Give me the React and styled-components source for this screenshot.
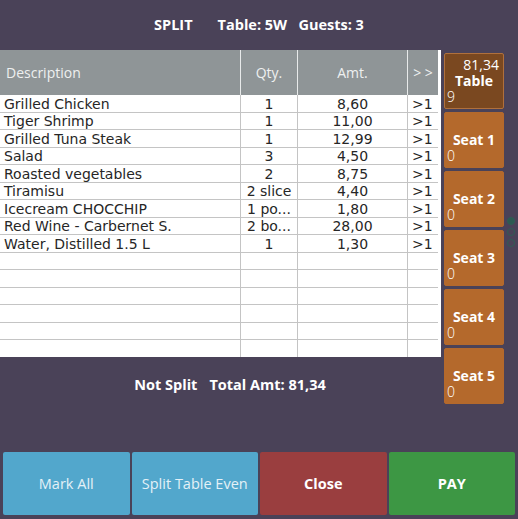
import React from 'react';
import styled, { createGlobalStyle } from 'styled-components';

const GlobalStyle = createGlobalStyle`
  html, body {
    margin: 0;
    padding: 0;
    background: #4a4258;
  }
`;

const Screen = styled.div`
  width: 518px;
  height: 519px;
  background: #4a4258;
  display: flex;
  flex-direction: column;
  font-family: 'Open Sans', 'Noto Sans', sans-serif;
  overflow: hidden;
`;

const TitleBar = styled.div`
  height: 50px;
  display: flex;
  align-items: center;
  justify-content: center;
  gap: 25px;
  color: #fff;
  font-weight: 700;
  font-size: 14.5px;
  padding: 0 0 2px 0;
  box-sizing: border-box;
  white-space: pre;
`;

const Main = styled.div`
  display: flex;
  align-items: flex-start;
`;

const LeftCol = styled.div`
  width: 441px;
  display: flex;
  flex-direction: column;
`;

const Grid = styled.div`
  width: 441px;
  height: 307px;
  background: #fff;
  overflow: hidden;
`;

const cols = '240px 57px 110px 31px';

const HeaderRow = styled.div`
  display: grid;
  grid-template-columns: ${cols};
  height: 45px;
  width: 438px;
  background: #8f9597;
`;

const HeaderCell = styled.div`
  display: flex;
  align-items: center;
  justify-content: ${(p) => (p.left ? 'flex-start' : 'center')};
  padding-left: ${(p) => (p.left ? '6px' : '0')};
  color: #eef0f0;
  font-size: 14px;
  border-left: ${(p) => (p.first ? 'none' : '1px solid #e8eaea')};
  white-space: pre;
`;

const Row = styled.div`
  display: grid;
  grid-template-columns: ${cols};
  width: 438px;
  height: 17.5px;
  box-sizing: border-box;
  border-bottom: ${(p) => (p.last ? 'none' : '1px solid #c4c4c4')};
  font-family: 'DejaVu Sans', 'Liberation Sans', sans-serif;
  font-size: 14px;
  color: #262626;
`;

const Cell = styled.div`
  display: flex;
  align-items: center;
  justify-content: ${(p) => p.align || 'center'};
  padding-left: ${(p) => (p.align === 'flex-start' ? '4px' : '0')};
  border-left: ${(p) => (p.first ? 'none' : '1px solid #c4c4c4')};
  white-space: nowrap;
  overflow: hidden;
  line-height: 1;
  padding-top: 1px;
`;

const TotalLine = styled.div`
  height: 54px;
  display: flex;
  align-items: center;
  justify-content: center;
  padding-left: 19px;
  color: #fff;
  font-weight: 700;
  font-size: 14.5px;
  gap: 12px;
`;

const SideCol = styled.div`
  margin-left: 3px;
  padding-top: 3px;
  width: 60px;
  display: flex;
  flex-direction: column;
  gap: 3px;
`;

const SeatButton = styled.div`
  height: 56px;
  box-sizing: border-box;
  border-radius: 2px;
  background: ${(p) => (p.active ? '#7a4820' : '#b4692c')};
  border: 1px solid ${(p) => (p.active ? '#b0703c' : '#b4692c')};
  color: #fff;
  display: flex;
  flex-direction: column;
  justify-content: center;
  padding: 0 2px;
  font-size: 14px;
`;

const SeatAmt = styled.div`
  text-align: right;
  line-height: 16px;
  height: 16px;
  padding-right: 2px;
  font-weight: 400;
`;

const SeatName = styled.div`
  text-align: center;
  font-weight: 700;
  line-height: 16px;
  height: 16px;
`;

const SeatCount = styled.div`
  text-align: left;
  font-weight: 300;
  line-height: 16px;
  height: 16px;
`;

const Pager = styled.div`
  margin-left: 3px;
  padding-top: 167px;
  display: flex;
  flex-direction: column;
  gap: 3px;
`;

const Dot = styled.span`
  display: block;
  width: 8px;
  height: 8px;
  box-sizing: border-box;
  border-radius: 50%;
  background: ${(p) => (p.on ? '#2c5a52' : 'transparent')};
  border: 1px solid #2f5d55;
`;

const ButtonBar = styled.div`
  margin-top: auto;
  margin-bottom: 4px;
  padding: 0 3px;
  display: grid;
  grid-template-columns: repeat(4, 1fr);
  gap: 2px;
`;

const ActionButton = styled.div`
  height: 63px;
  border-radius: 2px;
  background: ${(p) => p.color};
  color: ${(p) => (p.bold ? '#fff' : '#e4f1f7')};
  font-weight: ${(p) => (p.bold ? 700 : 400)};
  font-size: 14.5px;
  display: flex;
  align-items: center;
  justify-content: center;
`;

const items = [
  ['Grilled Chicken', '1', '8,60'],
  ['Tiger Shrimp', '1', '11,00'],
  ['Grilled Tuna Steak', '1', '12,99'],
  ['Salad', '3', '4,50'],
  ['Roasted vegetables', '2', '8,75'],
  ['Tiramisu', '2 slice', '4,40'],
  ['Icecream CHOCCHIP', '1 po...', '1,80'],
  ['Red Wine - Carbernet S.', '2 bo...', '28,00'],
  ['Water, Distilled 1.5 L', '1', '1,30'],
];

const rows = [...items, ...Array(6).fill(null)];

const seats = ['Seat 1', 'Seat 2', 'Seat 3', 'Seat 4', 'Seat 5'];

export default function App() {
  return (
    <>
      <GlobalStyle />
      <Screen>
        <TitleBar>
          <span>SPLIT</span>
          <span>Table: 5W   Guests: 3</span>
        </TitleBar>
        <Main>
          <LeftCol>
            <Grid>
              <HeaderRow>
                <HeaderCell first left>Description</HeaderCell>
                <HeaderCell>Qty.</HeaderCell>
                <HeaderCell>Amt.</HeaderCell>
                <HeaderCell>&gt; &gt;</HeaderCell>
              </HeaderRow>
              {rows.map((r, i) => (
                <Row key={i} last={i === rows.length - 1}>
                  <Cell first align="flex-start">{r ? r[0] : ''}</Cell>
                  <Cell>{r ? r[1] : ''}</Cell>
                  <Cell>{r ? r[2] : ''}</Cell>
                  <Cell align="flex-start">{r ? '>1' : ''}</Cell>
                </Row>
              ))}
            </Grid>
            <TotalLine>
              <span>Not Split</span>
              <span>Total Amt: 81,34</span>
            </TotalLine>
          </LeftCol>
          <SideCol>
            <SeatButton active>
              <SeatAmt>81,34</SeatAmt>
              <SeatName>Table</SeatName>
              <SeatCount>9</SeatCount>
            </SeatButton>
            {seats.map((s) => (
              <SeatButton key={s}>
                <SeatAmt>&nbsp;</SeatAmt>
                <SeatName>{s}</SeatName>
                <SeatCount>0</SeatCount>
              </SeatButton>
            ))}
          </SideCol>
          <Pager>
            <Dot on />
            <Dot />
            <Dot />
          </Pager>
        </Main>
        <ButtonBar>
          <ActionButton color="#52a7cc">Mark All</ActionButton>
          <ActionButton color="#52a7cc">Split Table Even</ActionButton>
          <ActionButton color="#9a3e3f" bold>Close</ActionButton>
          <ActionButton color="#3d9744" bold>PAY</ActionButton>
        </ButtonBar>
      </Screen>
    </>
  );
}
